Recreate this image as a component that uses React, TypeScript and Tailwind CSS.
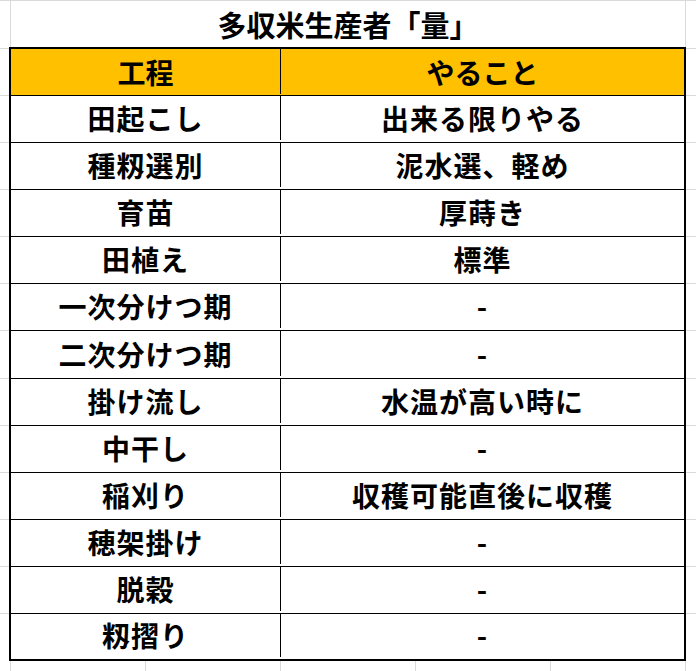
const rows: [string, string][] = [
  ["田起こし", "出来る限りやる"],
  ["種籾選別", "泥水選、軽め"],
  ["育苗", "厚蒔き"],
  ["田植え", "標準"],
  ["一次分けつ期", "-"],
  ["二次分けつ期", "-"],
  ["掛け流し", "水温が高い時に"],
  ["中干し", "-"],
  ["稲刈り", "収穫可能直後に収穫"],
  ["穂架掛け", "-"],
  ["脱穀", "-"],
  ["籾摺り", "-"],
];

function Gutter({ className }: { className: string }) {
  return (
    <div className={`flex flex-col pt-[1px] ${className}`}>
      {Array.from({ length: 13 }).map((_, i) => (
        <div key={i} className="h-[47.08px] shrink-0 border-t border-[#dadada]" />
      ))}
    </div>
  );
}

export default function App() {
  return (
    <div
      className="flex h-[671px] w-[696px] flex-col overflow-hidden bg-white text-black"
      style={{ fontFamily: '"Noto Sans CJK JP", "Noto Sans", sans-serif' }}
    >
      {/* title row */}
      <div className="flex h-[47px] shrink-0 border-t border-[#dadada]">
        <div className="w-[11px] shrink-0 border-r border-[#dadada]" />
        <div className="flex w-[675px] shrink-0 items-center justify-center border-r border-[#dadada] pt-[1px] text-[29px] font-bold leading-none">
          多収米生産者「量」
        </div>
        <div className="flex-1" />
      </div>

      {/* table */}
      <div className="flex h-[614px] shrink-0">
        <Gutter className="w-[9px] shrink-0" />
        <div className="flex w-[677px] shrink-0 flex-col border-2 border-black">
          <div className="flex h-[47.08px] shrink-0 border-b border-black bg-[#ffc000] pb-[1px] text-[28px] font-bold leading-none">
            <div className="flex w-[270px] shrink-0 items-center justify-center border-r border-black">工程</div>
            <div className="flex flex-1 items-center justify-center">やること</div>
          </div>
          {rows.map(([step, todo], i) => (
            <div
              key={step}
              className={`flex shrink-0 pb-[2px] text-[28px] font-bold leading-none tracking-[1px] ${
                i === rows.length - 1 ? "flex-1" : "h-[47.08px] border-b border-black"
              }`}
            >
              <div className="flex w-[270px] shrink-0 items-center justify-center border-r border-black">{step}</div>
              <div className="flex flex-1 items-center justify-center">{todo}</div>
            </div>
          ))}
        </div>
        <Gutter className="flex-1" />
      </div>

      {/* empty cells below */}
      <div className="flex flex-1">
        <div className="w-[11px] shrink-0 border-r border-[#dadada]" />
        <div className="w-[135px] shrink-0 border-r border-[#dadada]" />
        <div className="w-[135px] shrink-0 border-r border-[#dadada]" />
        <div className="w-[135px] shrink-0 border-r border-[#dadada]" />
        <div className="w-[135px] shrink-0 border-r border-[#dadada]" />
        <div className="w-[135px] shrink-0 border-r border-[#dadada]" />
        <div className="flex-1" />
      </div>
    </div>
  );
}
